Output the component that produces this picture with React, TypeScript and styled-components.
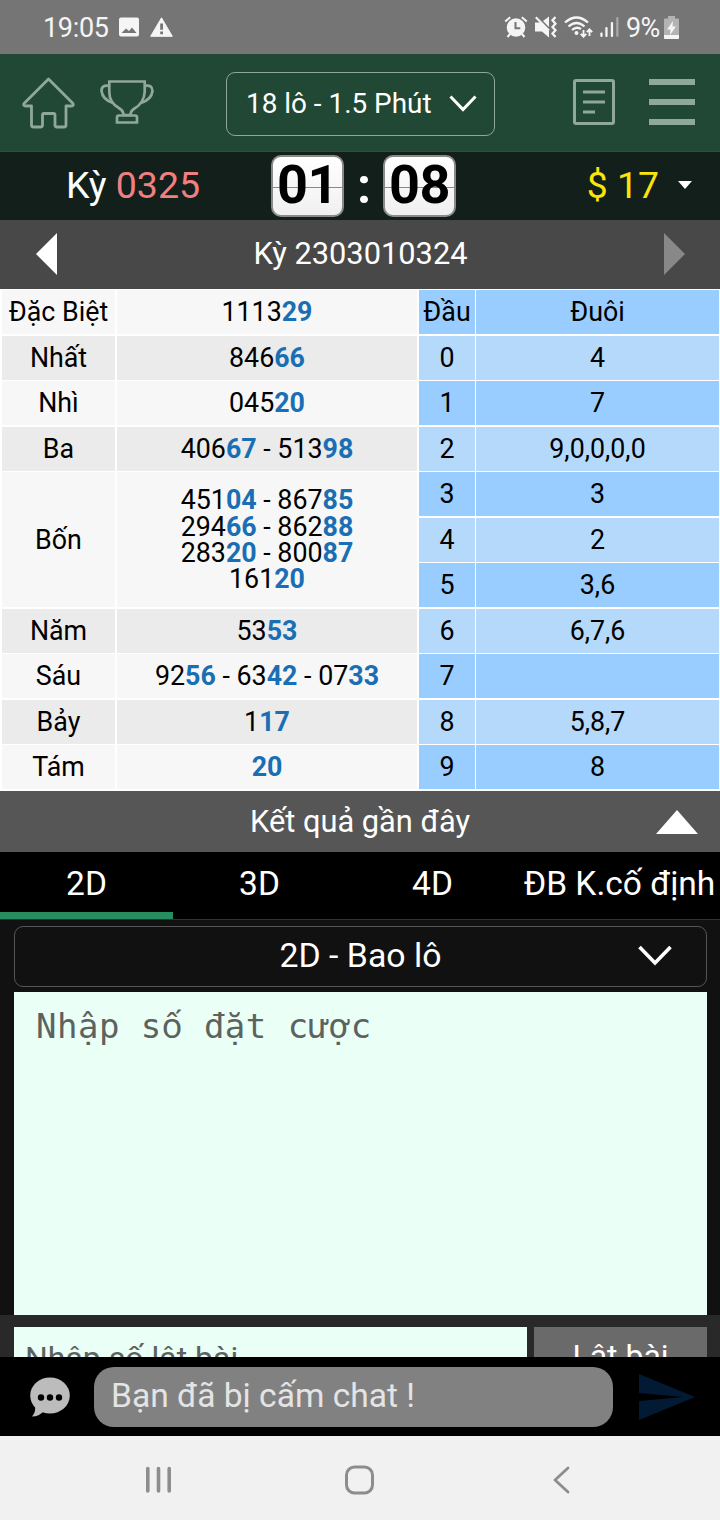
import React from "react";
import styled, { createGlobalStyle } from "styled-components";

const GlobalStyle = createGlobalStyle`
  * { box-sizing: border-box; }
  body { margin: 0; background: #000; font-family: Roboto, "Liberation Sans", sans-serif; color: #fff; }
  button { font: inherit; color: inherit; background: none; border: 0; padding: 0; }
`;

const Screen = styled.div`
  width: 720px;
  height: 1520px;
  display: flex;
  flex-direction: column;
  overflow: hidden;
`;

const Icon = styled.svg`
  display: block;
  flex: none;
`;

/* Status bar */

const StatusBar = styled.div`
  flex: none;
  height: 54px;
  padding: 0 41px 0 43px;
  background: #757575;
  color: #f5f5f5;
  font-size: 27px;
  line-height: 54px;
  display: flex;
  align-items: center;
  justify-content: space-between;
`;

const StatusGroup = styled.div`
  display: flex;
  align-items: center;
`;

const Clock = styled.span`
  width: 65px;
  padding-top: 2px;
  margin-right: 11px;
  letter-spacing: -0.3px;
`;

const Battery = styled.span`
  width: 34px;
  padding-top: 2px;
  letter-spacing: -0.7px;
  margin: 0 4px 0 7px;
`;

/* Header */

const Header = styled.header`
  flex: none;
  height: 98px;
  padding: 0 25px 1px 22px;
  background: #214735;
  border-bottom: 1px solid #30503f;
  display: grid;
  grid-template-columns: 204px 269px 1fr;
  align-items: center;
`;

const IconRow = styled.div<{ $gap: number; $end?: boolean }>`
  display: flex;
  align-items: center;
  gap: ${(p) => p.$gap}px;
  justify-content: ${(p) => (p.$end ? "flex-end" : "flex-start")};
`;

const GameSelect = styled.button`
  height: 64px;
  margin-top: 4px;
  border: 1px solid #8fa899;
  border-radius: 9px;
  padding: 0 17px 2px 19px;
  font-size: 27.9px;
  display: flex;
  align-items: center;
  justify-content: space-between;
`;

/* Countdown */

const TimerBar = styled.div`
  flex: none;
  height: 68px;
  padding-bottom: 2px;
  background: #121f1b;
  display: grid;
  grid-template-columns: 271px 185px 1fr;
  align-items: center;
`;

const Round = styled.div`
  font-size: 37.5px;
  padding: 0 5px 1px 0;
  text-align: center;
`;

const RoundNumber = styled.span`
  color: #f08080;
`;

const Countdown = styled.div`
  display: flex;
  align-items: center;
  justify-content: space-between;
  padding-top: 1px;
  font-weight: 700;
  font-size: 54px;
`;

const FlipCard = styled.span`
  width: 73px;
  height: 62px;
  border: 2px solid #8a8a8a;
  border-radius: 10px;
  background: linear-gradient(transparent 30px, #8a8a8a 30px, #8a8a8a 31px, transparent 31px),
    linear-gradient(#fff, #f0f0f0);
  color: #000;
  line-height: 56px;
  text-align: center;
  letter-spacing: -0.6px;
`;

const Colon = styled.span`
  font-size: 50px;
  line-height: 60px;
  padding-left: 1px;
`;

const Balance = styled.div`
  display: flex;
  align-items: center;
  justify-content: flex-end;
  gap: 19px;
  padding: 0 28px 1px 0;
  color: #fbe30c;
  font-size: 37.3px;
`;

/* Period navigation */

const PeriodBar = styled.div`
  flex: none;
  height: 69px;
  padding: 0 35px 1px 36px;
  background: #484848;
  display: flex;
  align-items: center;
  justify-content: space-between;
  font-size: 30.8px;
`;

const PeriodLabel = styled.span`
  padding-bottom: 2px;
`;

/* Result table */

const ResultGrid = styled.div`
  flex: none;
  padding: 1px 0 0 2px;
  background: #fff;
  color: #000;
  display: grid;
  grid-template-columns: 115px 302px 57px 244px;
  grid-template-rows: 46px repeat(5, 45px 46px);
  font-size: 26.8px;
  line-height: 26.4px;
`;

const Cell = styled.div<{ $row: number; $col: number; $span?: number }>`
  grid-row: ${(p) => p.$row} / span ${(p) => p.$span ?? 1};
  grid-column: ${(p) => p.$col};
  border: 0 solid #fff;
  border-right-width: ${(p) => (p.$col < 3 ? 2 : 1)}px;
  border-bottom-width: ${(p) => (p.$row % 2 ? 2 : 1)}px;
  padding-top: 1px;
  display: flex;
  flex-direction: column;
  align-items: center;
  justify-content: center;
  white-space: pre;
`;

const PrizeCell = styled(Cell)`
  background: ${(p) => (p.$row % 2 ? "#f7f7f7" : "#ebebeb")};
`;

const DigitCell = styled(Cell)`
  background: ${(p) => (p.$row % 2 ? "#99ccff" : "#b5d9fb")};
`;

const Tail = styled.b`
  color: #1a6eb3;
  font-weight: 700;
`;

/* Recent results */

const RecentBar = styled.div`
  flex: none;
  height: 61px;
  padding: 0 22px;
  background: #565656;
  font-size: 30.8px;
  display: grid;
  grid-template-columns: 42px 1fr 42px;
  align-items: center;
  text-align: center;
`;

/* Betting form */

const Tabs = styled.nav`
  flex: none;
  height: 68px;
  background: #000;
  border-bottom: 1px solid #333;
  display: grid;
  grid-template-columns: repeat(3, 173px) 201px;
`;

const Tab = styled.button<{ $active?: boolean }>`
  font-size: 33.5px;
  white-space: nowrap;
  padding-top: 3px;
  border-bottom: 7px solid ${(p) => (p.$active ? "#278d5f" : "transparent")};
`;

const BetPanel = styled.div`
  flex: none;
  height: 395px;
  background: #111;
  padding: 6px 13px 0 14px;
  display: flex;
  flex-direction: column;
  gap: 5px;
`;

const BetSelect = styled.button`
  height: 61px;
  border: 1px solid #555;
  border-radius: 9px;
  font-size: 33.8px;
  display: grid;
  grid-template-columns: 34px 1fr 34px;
  align-items: center;
  padding: 0 34px 3px;
`;

const BetInput = styled.div`
  flex: 1;
  background: #eafff6;
  color: #5c625f;
  padding: 13px 22px;
  font: 34px/40px "DejaVu Sans Mono", monospace;
  letter-spacing: 0.5px;
  white-space: pre;
`;

const AccentedVowel = styled.span`
  font-family: "Noto Sans", sans-serif;
`;

const ShufflePanel = styled.div`
  flex: none;
  height: 42px;
  overflow: hidden;
  background: #292929;
  padding: 12px 13px 0 14px;
  display: grid;
  grid-template-columns: 513px 173px;
  gap: 7px;
`;

const ShuffleInput = styled.input`
  height: 60px;
  border: 0;
  background: #eafff6;
  padding: 1px 11px 0;
  font: 32px Roboto, sans-serif;
  &::placeholder { color: #5c625f; opacity: 1; }
`;

const ShuffleButton = styled.button`
  height: 60px;
  padding-bottom: 2px;
  background: #6a6a6a;
  font-size: 32px;
`;

/* Chat */

const ChatBar = styled.div`
  flex: none;
  height: 79px;
  background: #000;
  display: flex;
  align-items: center;
  padding: 0 25px 0 30px;
`;

const ChatInput = styled.input`
  width: 519px;
  height: 60px;
  margin: 0 26px 0 24px;
  border: 0;
  border-radius: 20px;
  background: #818181;
  padding: 0 17px 3px;
  font: 33.6px Roboto, sans-serif;
  &::placeholder { color: #e4e4e4; opacity: 1; }
`;

const SystemNav = styled.div`
  flex: none;
  height: 84px;
  background: #f1f1f1;
  padding: 3px 150px 0 145px;
  display: grid;
  grid-template-columns: 200px 1fr auto;
  align-items: center;
`;

const PRIZES: { label: string; row: number; span?: number; lines: string[][] }[] = [
  { label: "Đặc Biệt", row: 1, lines: [["111329"]] },
  { label: "Nhất", row: 2, lines: [["84666"]] },
  { label: "Nhì", row: 3, lines: [["04520"]] },
  { label: "Ba", row: 4, lines: [["40667", "51398"]] },
  {
    label: "Bốn",
    row: 5,
    span: 3,
    lines: [["45104", "86785"], ["29466", "86288"], ["28320", "80087"], ["16120"]],
  },
  { label: "Năm", row: 8, lines: [["5353"]] },
  { label: "Sáu", row: 9, lines: [["9256", "6342", "0733"]] },
  { label: "Bảy", row: 10, lines: [["117"]] },
  { label: "Tám", row: 11, lines: [["20"]] },
];

const TAILS = ["4", "7", "9,0,0,0,0", "3", "2", "3,6", "6,7,6", "", "5,8,7", "8"];

const Numbers = ({ values }: { values: string[] }) => (
  <div>
    {values.map((v, i) => (
      <React.Fragment key={i}>
        {i > 0 && " - "}
        {v.slice(0, -2)}
        <Tail>{v.slice(-2)}</Tail>
      </React.Fragment>
    ))}
  </div>
);

const ImageIcon = () => (
  <Icon width="20" height="20" viewBox="0 0 20 20">
    <path fill="#f5f5f5" fillRule="evenodd" d="M2 0.500h16a2 2 0 0 1 2 2v15a2 2 0 0 1-2 2H2a2 2 0 0 1-2-2v-15a2 2 0 0 1 2-2zM2.500 16h15l-4.500-5.500-3 3.500-3-2.500z" />
  </Icon>
);

const WarningIcon = () => (
  <Icon width="23" height="20" viewBox="0 0 23 20">
    <path fill="#f5f5f5" stroke="#f5f5f5" strokeLinejoin="round" d="M11.500 0.800 22.300 19.300H0.700z" />
    <path fill="#757575" d="M10.200 6.500h2.800v6.300h-2.800zM10.200 14.500h2.800v2.700h-2.800z" />
  </Icon>
);

const AlarmIcon = () => (
  <Icon width="24" height="22" viewBox="0 0 24 22">
    <circle cx="12" cy="11.500" r="9.300" fill="#f5f5f5" />
    <path d="M1.200 5.500 6.200 1.200M22.800 5.500 17.800 1.200M6 18l-2.500 3M18 18l2.500 3" stroke="#f5f5f5" strokeWidth="2" fill="none" />
    <path d="M11.500 6v6.300h4.800" stroke="#757575" strokeWidth="2" fill="none" />
  </Icon>
);

const MuteIcon = () => (
  <Icon width="22" height="22" viewBox="0 0 22 22">
    <path fill="#f5f5f5" d="M0 6.500h5.500L14 15v6.500L7 15.500H0zM8 5l6-4.500V11z" />
    <path d="M0.800 1.200 14 14.500" stroke="#f5f5f5" strokeWidth="2" />
    <path d="m20.500 1-3 3.300 3 3.400-3 3.300 3 3.300-3 3.300 3 3.300" stroke="#f5f5f5" strokeWidth="2.300" fill="none" />
  </Icon>
);

const WifiIcon = () => (
  <Icon width="29" height="22" viewBox="0 0 29 22">
    <g fill="none" stroke="#f5f5f5" strokeWidth="2.300">
      <path d="M1 6.500Q12.500-3.500 24 6.500M4.500 10.500Q12.500 3.500 20.500 10.500M8 14Q12.500 10 17 13" />
      <path strokeWidth="1.900" d="M19.500 14v6.500M16.800 17.800l2.700 2.900 2.700-2.900M25.500 20v-6.500M22.800 16.200l2.700-2.900 2.700 2.900" />
    </g>
    <circle cx="12.500" cy="17" r="2" fill="#f5f5f5" />
  </Icon>
);

const SignalIcon = () => (
  <Icon width="19" height="20" viewBox="0 0 19 20">
    <g fill="#f5f5f5">
      <rect x="0.300" y="15.500" width="2.300" height="4.500" rx="1" />
      <rect x="5.300" y="10" width="2.300" height="10" rx="1" />
      <rect x="10.800" y="5" width="2.300" height="15" rx="1" />
      <rect x="16.200" y="0" width="2.300" height="20" rx="1" opacity="0.400" />
    </g>
  </Icon>
);

const BatteryIcon = () => (
  <Icon width="15" height="23" viewBox="0 0 15 23">
    <path fill="#b3b3b3" d="M4 0h7v2.500h3a1 1 0 0 1 1 1V22a1 1 0 0 1-1 1H1a1 1 0 0 1-1-1V3.500a1 1 0 0 1 1-1h3z" />
    <path fill="#f5f5f5" d="M0 19h15v3a1 1 0 0 1-1 1H1a1 1 0 0 1-1-1zM9 5 3 13.500h3.500L6 19l6-8.500H8.500z" />
  </Icon>
);

const HomeIcon = () => (
  <Icon width="53" height="53" viewBox="0 -1 53 53" fill="none" stroke="#8fa899" strokeWidth="2.800" strokeLinejoin="round">
    <path d="M26.500 2 51 26.500Q52 29 49.500 29H44V48Q44 50 42 50H35Q33 50 33 48V38Q33 36.500 31.500 36.500H22Q20.500 36.500 20.500 38V48Q20.500 50 18.500 50H11.500Q9.500 50 9.500 48V29H3.500Q1 29 2 26.500Z" />
  </Icon>
);

const TrophyIcon = () => (
  <Icon width="54" height="44" viewBox="0 0 54 44" fill="none" stroke="#8fa899" strokeWidth="2.700">
    <path d="M9.300 1.500H44.700V12Q44 23 34.500 28.500Q30.500 31 30.500 35H23.500Q23.500 31 19.500 28.500Q9.300 23 9.300 12Z" />
    <path d="M9.300 6Q1.500 4.500 1.500 11Q2.500 19.500 13 23M44.700 6Q52.500 4.500 52.500 11Q51.500 19.500 41 23" />
    <path d="M17 42.500V37.500Q17 35.500 19 35.500H35Q37 35.500 37 37.500V42.500Z" />
  </Icon>
);

const DocumentIcon = () => (
  <Icon width="42" height="46" viewBox="0 0 42 46" fill="none" stroke="#8fa899" strokeWidth="3">
    <rect x="1.500" y="1.500" width="39" height="43" rx="1.500" />
    <path d="M10 13H32M10 23H32M10 33H22" />
  </Icon>
);

const MenuIcon = () => (
  <Icon width="46" height="46" viewBox="0 0 46 46" stroke="#8fa899" strokeWidth="6">
    <path d="M0 3H46M0 23H46M0 43H46" />
  </Icon>
);

const ChatIcon = () => (
  <Icon width="40" height="40" viewBox="0 0 40 40">
    <ellipse cx="20" cy="18.500" rx="19.800" ry="18" fill="#bcbcbc" />
    <path fill="#bcbcbc" d="M5 29Q6 35 2 39.500 9 39.500 14 34z" />
    <circle cx="11" cy="20.500" r="3.200" />
    <circle cx="20" cy="20.500" r="3.200" />
    <circle cx="29" cy="20.500" r="3.200" />
  </Icon>
);

export default function App() {
  return (
    <Screen>
      <GlobalStyle />
      <StatusBar>
        <StatusGroup>
          <Clock>19:05</Clock>
          <IconRow $gap={11}>
            <ImageIcon />
            <WarningIcon />
          </IconRow>
        </StatusGroup>
        <StatusGroup>
          <IconRow $gap={7}>
            <AlarmIcon />
            <MuteIcon />
            <WifiIcon />
            <SignalIcon />
          </IconRow>
          <Battery>9%</Battery>
          <BatteryIcon />
        </StatusGroup>
      </StatusBar>

      <Header>
        <IconRow $gap={25}>
          <HomeIcon />
          <TrophyIcon />
        </IconRow>
        <GameSelect>
          18 lô - 1.5 Phút
          <Icon width="28" height="17" viewBox="0 0 28 17" fill="none" stroke="#fff" strokeWidth="3">
            <path d="M1.500 1.500 14 14.500 26.500 1.500" />
          </Icon>
        </GameSelect>
        <IconRow $gap={34} $end>
          <DocumentIcon />
          <MenuIcon />
        </IconRow>
      </Header>

      <TimerBar>
        <Round>
          Kỳ <RoundNumber>0325</RoundNumber>
        </Round>
        <Countdown>
          <FlipCard>01</FlipCard>
          <Colon>:</Colon>
          <FlipCard>08</FlipCard>
        </Countdown>
        <Balance>
          $ 17
          <Icon width="14" height="8" viewBox="0 0 14 8">
            <path fill="#fff" d="M0 0h14L7 8z" />
          </Icon>
        </Balance>
      </TimerBar>

      <PeriodBar>
        <Icon width="21" height="42" viewBox="0 0 21 42">
          <path fill="#fff" d="M21 0v42L0 21z" />
        </Icon>
        <PeriodLabel>Kỳ 2303010324</PeriodLabel>
        <Icon width="21" height="42" viewBox="0 0 21 42">
          <path fill="#888" d="M0 0v42l21-21z" />
        </Icon>
      </PeriodBar>

      <ResultGrid>
        {PRIZES.map((p) => (
          <React.Fragment key={p.label}>
            <PrizeCell $row={p.row} $col={1} $span={p.span}>{p.label}</PrizeCell>
            <PrizeCell $row={p.row} $col={2} $span={p.span}>
              {p.lines.map((l, i) => <Numbers key={i} values={l} />)}
            </PrizeCell>
          </React.Fragment>
        ))}
        <DigitCell $row={1} $col={3}>Đầu</DigitCell>
        <DigitCell $row={1} $col={4}>Đuôi</DigitCell>
        {TAILS.map((t, i) => (
          <React.Fragment key={i}>
            <DigitCell $row={i + 2} $col={3}>{i}</DigitCell>
            <DigitCell $row={i + 2} $col={4}>{t}</DigitCell>
          </React.Fragment>
        ))}
      </ResultGrid>

      <RecentBar>
        <span />
        Kết quả gần đây
        <Icon width="42" height="24" viewBox="0 0 42 24">
          <path fill="#fff" d="M21 0 42 24H0z" />
        </Icon>
      </RecentBar>

      <Tabs>
        <Tab $active>2D</Tab>
        <Tab>3D</Tab>
        <Tab>4D</Tab>
        <Tab>ĐB K.cố định</Tab>
      </Tabs>

      <BetPanel>
        <BetSelect>
          <span />
          2D - Bao lô
          <Icon width="34" height="24" viewBox="0 -2.500 34 24" fill="none" stroke="#fff" strokeWidth="3.600">
            <path d="M1.500 1.500 17 17.500 32.500 1.500" />
          </Icon>
        </BetSelect>
        <BetInput>
          Nhập s<AccentedVowel>ố</AccentedVowel> đặt cược
        </BetInput>
      </BetPanel>

      <ShufflePanel>
        <ShuffleInput placeholder="Nhập số lật bài" />
        <ShuffleButton>Lật bài</ShuffleButton>
      </ShufflePanel>

      <ChatBar>
        <ChatIcon />
        <ChatInput placeholder="Bạn đã bị cấm chat !" />
        <Icon width="56" height="46" viewBox="0 0 56 46">
          <path fill="#021a33" d="M0 0 56 23 0 46V27L44 23 0 19z" />
        </Icon>
      </ChatBar>

      <SystemNav>
        <Icon width="27" height="28" viewBox="0 0 27 28" stroke="#8d8d8d" strokeWidth="3.600" strokeLinecap="round">
          <path d="M2.800 2.500V25M13.500 2.500V25M24.200 2.500V25" />
        </Icon>
        <Icon width="30" height="30" viewBox="0 0 30 30" fill="none" stroke="#8d8d8d" strokeWidth="3">
          <rect x="1.500" y="2" width="26" height="26" rx="8" />
        </Icon>
        <Icon width="17" height="28" viewBox="0 0 17 28" fill="none" stroke="#8d8d8d" strokeWidth="2.800" strokeLinecap="round" strokeLinejoin="round">
          <path d="M15 2 2 14 15 26" />
        </Icon>
      </SystemNav>
    </Screen>
  );
}
